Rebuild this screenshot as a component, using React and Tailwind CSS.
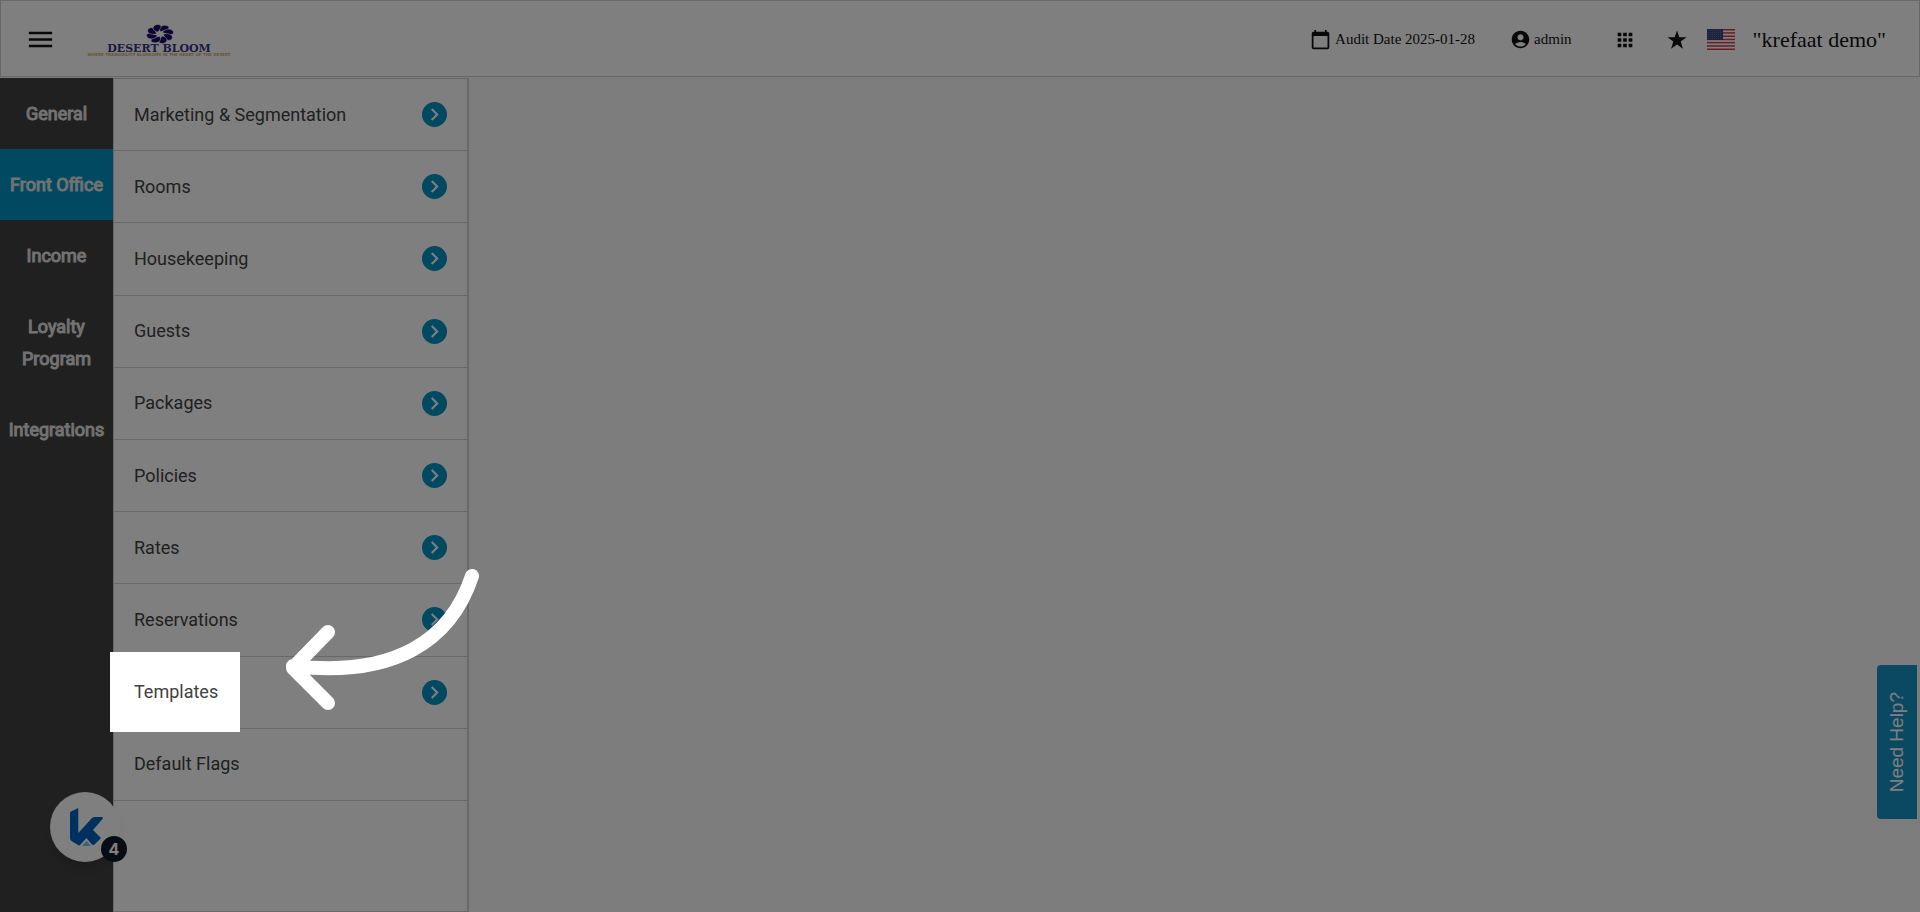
import { MdAccountCircle, MdApps, MdChevronRight, MdMenu } from 'react-icons/md'

const sections = ['General', 'Front Office', 'Income', 'Loyalty Program', 'Integrations']

const menuItems = [
  { label: 'Marketing & Segmentation', expandable: true },
  { label: 'Rooms', expandable: true },
  { label: 'Housekeeping', expandable: true },
  { label: 'Guests', expandable: true },
  { label: 'Packages', expandable: true },
  { label: 'Policies', expandable: true },
  { label: 'Rates', expandable: true },
  { label: 'Reservations', expandable: true },
  { label: 'Templates', expandable: true, highlighted: true },
  { label: 'Default Flags', expandable: false },
]

const petals = [0, 45, 90, 135, 180, 225, 270, 315]

const Logo = () => (
  <svg viewBox="0 0 142 36" className="w-[142px] h-9 overflow-visible" role="img" aria-label="Desert Bloom">
    <g transform="translate(73 12)" fill="#1a0a66" stroke="#fff" strokeWidth="0.5">
      {petals.map((angle) => (
        <path
          key={angle}
          d="M0.5 -2.5C-1.5 -5 0 -9.5 3.5 -9.5C7 -9.5 8 -6 5.5 -4.5C4 -3.5 2 -3.5 0.5 -2.5Z"
          transform={`scale(1.3 0.92) rotate(${angle})`}
        />
      ))}
    </g>
    <text x="72" y="30" textAnchor="middle" fontSize="11" fontWeight="bold" fontFamily="DejaVu Serif, serif" fill="#3d3385">
      DESERT BLOOM
    </text>
    <text x="72" y="34" textAnchor="middle" fontSize="4" fontWeight="bold" fontFamily="DejaVu Sans, sans-serif" fill="#c9ab6c">
      WHERE TRANQUILITY BLOSSOMS IN THE HEART OF THE DESERT
    </text>
  </svg>
)

const CalendarIcon = () => (
  <svg viewBox="0 0 24 24" className="size-[21px]" fill="currentColor" aria-hidden="true">
    <path d="M20 3h-1V1h-2v2H7V1H5v2H4c-1.1 0-2 .9-2 2v16c0 1.1.9 2 2 2h16c1.1 0 2-.9 2-2V5c0-1.1-.9-2-2-2zm0 18H4V8h16v13z" />
  </svg>
)

const StarIcon = () => (
  <svg viewBox="0 0 20 20" className="size-5" fill="currentColor" aria-hidden="true">
    <path d="M10 0.5L12.3 7.3H19.5L13.7 11.5L15.9 18.8L10 14.5L4.1 18.8L6.3 11.5L0.5 7.3H7.7Z" />
  </svg>
)

const UsFlag = () => (
  <svg viewBox="0 0 28 21" className="w-7 h-[21px]" role="img" aria-label="United States">
    <rect width="28" height="21" fill="#fff" />
    {[0, 3.2, 6.5, 9.7, 12.9, 16.2, 19.5].map((y) => (
      <rect key={y} y={y} width="28" height="1.5" fill="#cf3a50" />
    ))}
    <rect width="16" height="11" fill="#344478" />
    {[1.5, 3.5, 5.5, 7.5, 9.5].map((y) => (
      <path key={y} d={`M1 ${y}H15`} stroke="#7d89b0" strokeWidth="0.8" strokeDasharray="0.8 1.2" />
    ))}
  </svg>
)

const Header = () => (
  <header className="h-[77px] shrink-0 flex items-center border border-[#d0d0d0] bg-white pt-0.5 pl-6 pr-[33px] font-['Liberation_Serif',serif] text-[#111111]">
    <button aria-label="Menu">
      <MdMenu className="size-[31px]" />
    </button>
    <a href="#home" className="ml-[31px]">
      <Logo />
    </a>
    <div className="ml-auto flex items-center">
      <div className="flex items-center gap-1 text-[15px]">
        <CalendarIcon />
        Audit Date 2025-01-28
      </div>
      <button className="ml-[35px] flex items-center gap-[3px] text-[15px]">
        <MdAccountCircle className="size-[21px]" />
        admin
      </button>
      <button aria-label="Apps" className="ml-[42px]">
        <MdApps className="size-[22px]" />
      </button>
      <button aria-label="Favorites" className="ml-[31px]">
        <StarIcon />
      </button>
      <button aria-label="Language" className="ml-5">
        <UsFlag />
      </button>
      <span className="ml-[18px] text-[22px]">"krefaat demo"</span>
    </div>
  </header>
)

const SectionNav = () => (
  <nav className="w-[113px] shrink-0 bg-[#414141]">
    {sections.map((name) => (
      <a
        key={name}
        href="#section"
        className={
          name === 'Front Office'
            ? 'block bg-[#0092c3] pt-5 pb-[19px] text-center text-lg/8 text-[#e4e4e4] [-webkit-text-stroke:1px]'
            : 'block pt-5 pb-[19px] text-center text-lg/8 text-[#e4e4e4] [-webkit-text-stroke:1px]'
        }
      >
        {name}
      </a>
    ))}
  </nav>
)

const MenuItem = ({ label, expandable, highlighted }) => (
  <li className="flex items-center justify-between border-b border-[#d0d0d0] pr-5">
    {highlighted ? (
      <a href="#item" className="relative z-20 -my-2 -ml-1 flex h-20 items-center bg-white pl-6 pr-[22px] text-lg text-[#414141]">
        {label}
      </a>
    ) : (
      <a href="#item" className="pl-5 text-lg text-[#414141]">
        {label}
      </a>
    )}
    {expandable && (
      <button aria-label={`Open ${label}`} className="grid size-[25px] place-items-center rounded-full bg-[#0092c3] text-white">
        <MdChevronRight className="size-[25px]" />
      </button>
    )}
  </li>
)

const HintArrow = () => (
  <svg viewBox="0 0 196 142" className="pointer-events-none absolute left-[285px] top-[568px] z-30 h-[142px] w-[196px]" aria-hidden="true">
    <path
      d="M187 8C166 72 110 110 8 98M43 64L8 100L43 135"
      fill="none"
      stroke="#fff"
      strokeWidth="14"
      strokeLinecap="round"
      strokeLinejoin="round"
    />
  </svg>
)

const HelpWidget = () => (
  <button aria-label="Open help center" className="absolute bottom-[50px] left-[50px] grid size-[70px] place-items-center rounded-full bg-white pl-[3px] shadow-lg">
    <svg viewBox="0 0 33 38" className="h-[38px] w-[33px]" aria-hidden="true">
      <path d="M0 5Q0 4 1 3.5L8.3 0V25L22 10Q23 9 25 9H32Q33.5 9 32.5 11L23 22L31 30L25 36Q23 38 21.5 36L16.5 30L10.5 36.5Q9.5 38 8 37L1.5 33Q0 32 0 30Z" fill="#0062bd" />
      <path d="M16.5 33L21 38H12Z" fill="#7cc4ea" />
    </svg>
    <span className="absolute -right-[7px] bottom-0 grid size-[26px] place-items-center rounded-full bg-[#101828] font-['Inter',sans-serif] text-base font-bold">
      <span className="text-white">4</span>
    </span>
  </button>
)

export default function App() {
  return (
    <div className="relative flex min-h-screen flex-col bg-[#fafafa] font-['Roboto',sans-serif]">
      <Header />
      <div className="mt-px flex flex-1">
        <SectionNav />
        <aside className="w-[356px] shrink-0 border border-r-2 border-[#d0d0d0] bg-white">
          <ul className="grid min-h-[722px] auto-rows-fr">
            {menuItems.map((item) => (
              <MenuItem key={item.label} {...item} />
            ))}
          </ul>
        </aside>
        <main className="flex-1" />
      </div>

      <button className="absolute bottom-[93px] right-[3px] flex h-[154px] w-10 items-center justify-center rounded-l bg-[#1592c3] font-['Liberation_Sans',sans-serif] text-[19px] text-white">
        <span className="rotate-180 [writing-mode:vertical-rl]">Need Help?</span>
      </button>
      <HelpWidget />

      <div className="pointer-events-none absolute inset-0 z-10 bg-black/50" />
      <HintArrow />
    </div>
  )
}
